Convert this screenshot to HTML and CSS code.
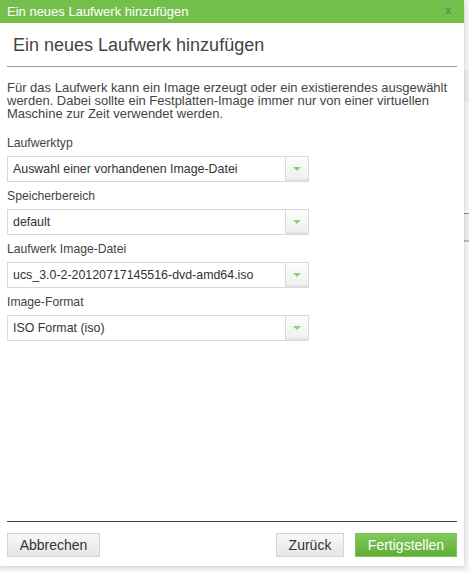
FILE: index.html
```html
<!DOCTYPE html>
<html lang="de">
<head>
<meta charset="utf-8">
<link rel="stylesheet" href="styles.css">
</head>
<body>
<div class="page">
  <div class="bg-strip bg-strip-1"></div>
  <div class="bg-strip bg-strip-2"></div>
  <div class="dialog">
    <div class="titlebar">
      <span class="title">Ein neues Laufwerk hinzufügen</span>
      <span class="close">x</span>
    </div>
    <div class="body">
      <h1 class="heading">Ein neues Laufwerk hinzufügen</h1>
      <p class="intro">Für das Laufwerk kann ein Image erzeugt oder ein existierendes ausgewählt werden. Dabei sollte ein Festplatten-Image immer nur von einer virtuellen Maschine zur Zeit verwendet werden.</p>
      <div class="field">
        <div class="label">Laufwerktyp</div>
        <div class="select"><span class="value">Auswahl einer vorhandenen Image-Datei</span><span class="arrow"><span class="tri"></span></span></div>
      </div>
      <div class="field">
        <div class="label">Speicherbereich</div>
        <div class="select"><span class="value">default</span><span class="arrow"><span class="tri"></span></span></div>
      </div>
      <div class="field">
        <div class="label">Laufwerk Image-Datei</div>
        <div class="select"><span class="value">ucs_3.0-2-20120717145516-dvd-amd64.iso</span><span class="arrow"><span class="tri"></span></span></div>
      </div>
      <div class="field">
        <div class="label">Image-Format</div>
        <div class="select"><span class="value">ISO Format (iso)</span><span class="arrow"><span class="tri"></span></span></div>
      </div>
    </div>
    <div class="footer">
      <button class="btn btn-cancel">Abbrechen</button>
      <div class="spacer"></div>
      <button class="btn btn-back">Zurück</button>
      <button class="btn btn-primary">Fertigstellen</button>
    </div>
  </div>
</div>
</body>
</html>
```
FILE: styles.css
```css
html, body {
  margin: 0;
  padding: 0;
  background: #f4f4f4;
}
body {
  font-family: "Liberation Sans", Arial, sans-serif;
  color: #444;
  width: 469px;
  height: 572px;
  overflow: hidden;
}
.page {
  position: relative;
  width: 469px;
  height: 572px;
}
.bg-strip {
  position: absolute;
  left: 464px;
  width: 5px;
}
.bg-strip-1 {
  top: 70px;
  height: 32px;
  background: #e9ece6;
}
.bg-strip-2 {
  top: 213px;
  height: 26px;
  background: #ececec;
  border-top: 1px solid #888;
  border-bottom: 2px solid #bbb;
}
.dialog {
  position: absolute;
  left: 0;
  top: 0;
  width: 464px;
  height: 566px;
  background: #fff;
  box-shadow: 0 1px 4px rgba(0,0,0,0.18);
  display: flex;
  flex-direction: column;
}
.titlebar {
  height: 23px;
  background: #74bf4b;
  display: flex;
  align-items: center;
  justify-content: space-between;
  padding: 0 13px 0 7px;
}
.title {
  color: #fff;
  font-size: 13px;
}
.close {
  color: #4f8f63;
  font-size: 11px;
  font-weight: bold;
  line-height: 1;
  margin-top: -2px;
}
.body {
  flex: 1;
  padding: 0 7px;
}
.heading {
  margin: 11px 0 0 0;
  padding: 0 0 10px 6px;
  font-size: 18px;
  font-weight: normal;
  color: #444;
  line-height: 22px;
  border-bottom: 1px solid #999;
}
.intro {
  margin: 14px 0 0 0;
  font-size: 13px;
  line-height: 13px;
  color: #444;
}
.field {
  margin-top: 16px;
}
.field + .field {
  margin-top: 7px;
}
.label {
  font-size: 12.2px;
  line-height: 14px;
  color: #444;
  margin-bottom: 6px;
}
.select {
  width: 300px;
  height: 24px;
  border: 1px solid #d9d9d9;
  display: flex;
  align-items: stretch;
  background: #fff;
}
.value {
  flex: 1;
  font-size: 12.4px;
  line-height: 24px;
  padding-left: 5px;
  color: #333;
  white-space: nowrap;
  overflow: hidden;
}
.arrow {
  width: 23px;
  border-left: 1px solid #d9d9d9;
  background: linear-gradient(#fdfdfd, #efefef);
  border-bottom: 2px solid #e4e4e4;
  display: flex;
  align-items: center;
  justify-content: center;
  box-sizing: border-box;
}
.tri {
  width: 0;
  height: 0;
  border-left: 4px solid transparent;
  border-right: 4px solid transparent;
  border-top: 4px solid #8fcc84;
  margin-top: 2px;
}
.footer {
  margin: 0 7px;
  border-top: 1px solid #444;
  padding: 11px 0 9px 0;
  display: flex;
  align-items: center;
  gap: 11px;
}
.spacer {
  flex: 1;
}
.btn {
  font-family: "Liberation Sans", Arial, sans-serif;
  font-size: 14px;
  color: #333;
  height: 24px;
  padding: 0 6px;
  border: 1px solid #d4d4d4;
  background: linear-gradient(#f8f8f8, #e6e6e6);
  line-height: 22px;
  cursor: pointer;
}
.btn-cancel {
  width: 93px;
}
.btn-back {
  width: 68px;
}
.btn-primary {
  color: #fff;
  background: linear-gradient(#80c95a, #5fae37);
  border-color: #7cc55a;
  width: 102px;
}
```
